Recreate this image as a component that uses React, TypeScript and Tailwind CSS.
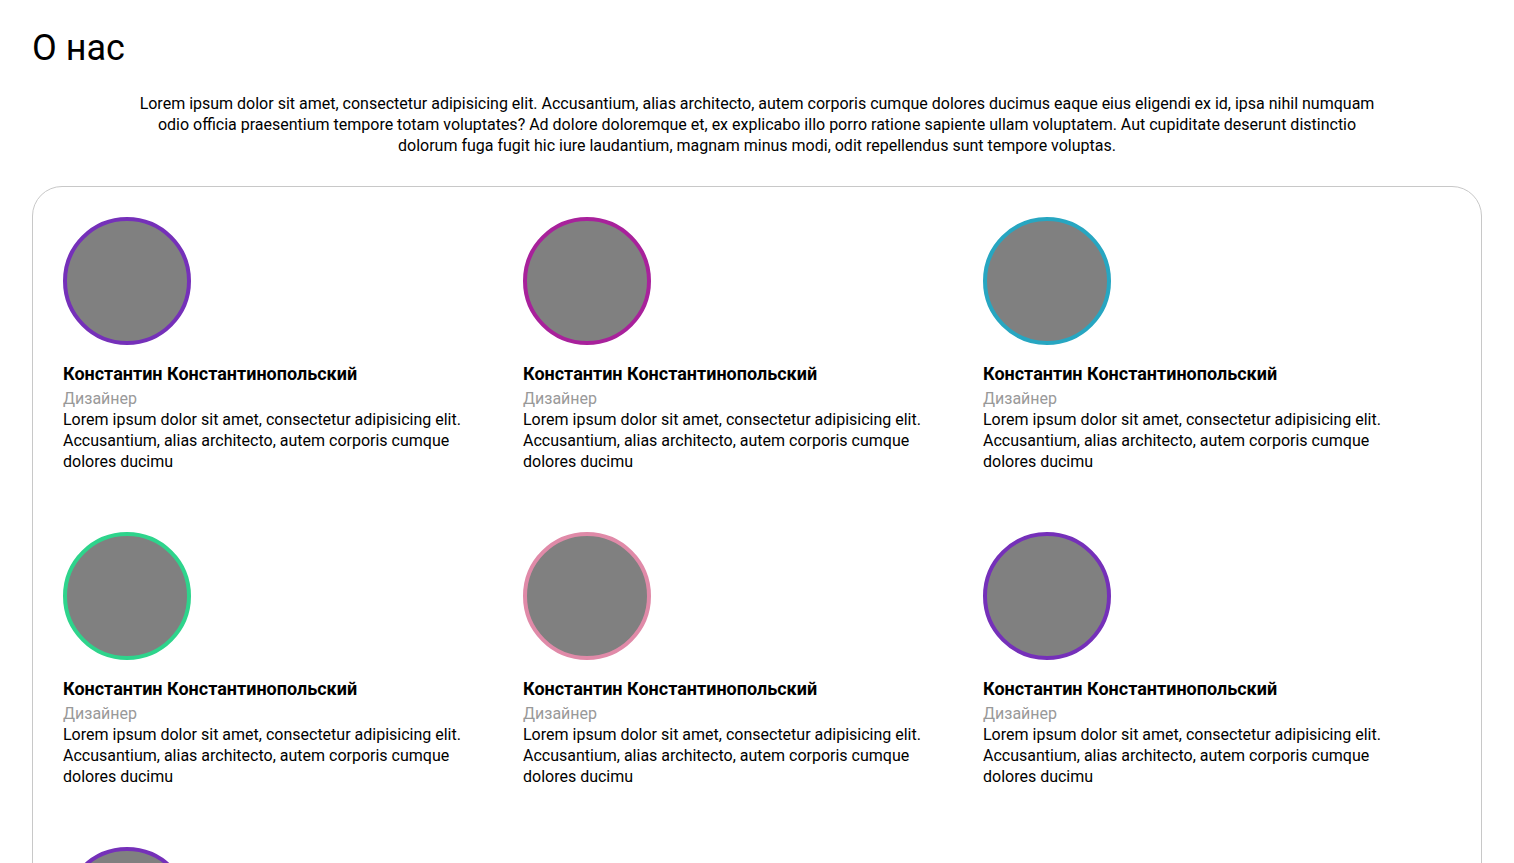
import React from "react";

const team = [
  { ring: "border-[#7530b9]" },
  { ring: "border-[#a8219b]" },
  { ring: "border-[#27a6c1]" },
  { ring: "border-[#2ed48c]" },
  { ring: "border-[#e08aa8]" },
  { ring: "border-[#7530b9]" },
  { ring: "border-[#7530b9]" },
];

function Member({ ring }: { ring: string }) {
  return (
    <div className="w-[400px] flex flex-col">
      <div className={`w-[128px] h-[128px] rounded-full bg-[#808080] border-4 ${ring}`} />
      <h3 className="mt-[18px] mb-1 text-lg leading-[21px] font-bold text-black">
        Константин Константинопольский
      </h3>
      <span className="text-base leading-[21px] text-[#999]">Дизайнер</span>
      <p className="text-base leading-[21px] text-black">
        Lorem ipsum dolor sit amet, consectetur adipisicing elit. Accusantium,
        alias architecto, autem corporis cumque dolores ducimu
      </p>
    </div>
  );
}

export default function App() {
  return (
    <section className="px-8 pt-6 pb-10 bg-white font-['Roboto',sans-serif] text-black">
      <h1 className="text-[36px] leading-[48px] font-normal">О нас</h1>
      <p className="mt-[21px] mx-auto max-w-[1250px] text-center text-base leading-[21px]">
        Lorem ipsum dolor sit amet, consectetur adipisicing elit. Accusantium,
        alias architecto, autem corporis cumque dolores ducimus eaque eius
        eligendi ex id, ipsa nihil numquam odio officia praesentium tempore
        totam voluptates? Ad dolore doloremque et, ex explicabo illo porro
        ratione sapiente ullam voluptatem. Aut cupiditate deserunt distinctio
        dolorum fuga fugit hic iure laudantium, magnam minus modi, odit
        repellendus sunt tempore voluptas.
      </p>
      <div className="mt-[30px] border border-[#c8c8c8] rounded-[30px] p-[30px]">
        <div className="flex flex-wrap gap-[60px]">
          {team.map((m, i) => (
            <Member key={i} ring={m.ring} />
          ))}
        </div>
      </div>
    </section>
  );
}
